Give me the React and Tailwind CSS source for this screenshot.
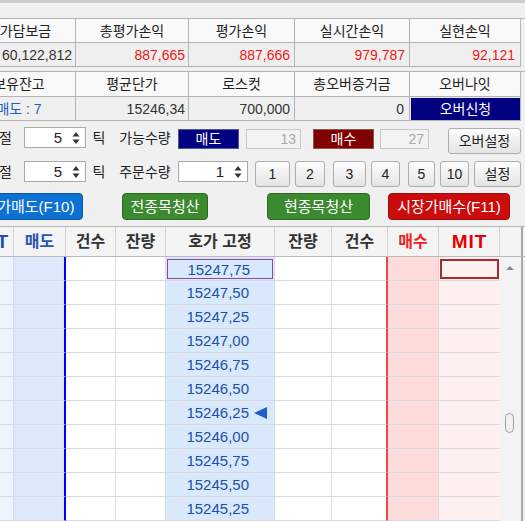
import React from 'react';

const NUM = "font-['Liberation_Sans',sans-serif]";

const summaryTop = [
  { w: 'w-[113px]', label: '추가담보금', value: '60,122,812', cls: 'justify-end pr-[3px] bg-[#efefef] text-[#333]' },
  { w: 'w-[113px]', label: '총평가손익', value: '887,665', cls: 'justify-end pr-[3px] bg-[#efefef] text-[#f01818]' },
  { w: 'w-[106px]', label: '평가손익', value: '887,666', cls: 'justify-end pr-[4px] bg-[#efefef] text-[#f01818]' },
  { w: 'w-[115px]', label: '실시간손익', value: '979,787', cls: 'justify-end pr-[4px] bg-[#efefef] text-[#f01818]' },
  { w: 'w-[111px]', label: '실현손익', value: '92,121', cls: 'justify-end pr-[5px] bg-[#efefef] text-[#f01818]' },
];

const summaryBottom = [
  { w: 'w-[113px]', label: '보유잔고', value: '매도 : 7', cls: 'justify-center bg-[#efefef] text-[#1c5cc4]' },
  { w: 'w-[113px]', label: '평균단가', value: '15246,34', cls: 'justify-end pr-[3px] bg-[#efefef] text-[#333]' },
  { w: 'w-[106px]', label: '로스컷', value: '700,000', cls: 'justify-end pr-[4px] bg-[#efefef] text-[#333]' },
  { w: 'w-[115px]', label: '총오버증거금', value: '0', cls: 'justify-end pr-[5px] bg-[#efefef] text-[#333]' },
  { w: 'w-[111px]', label: '오버나잇', value: '오버신청', cls: 'justify-center bg-[#000080] text-white border-l border-t border-[#e8e8e8]' },
];

const gridCols = [
  { w: 'w-[51px]', head: 'MIT', hc: 'justify-end pr-[4px] text-[#1f4fb8] text-[19px] tracking-[1px]', bg: 'bg-[#eef4fc]', br: 'border-r border-r-[#d8dce4]' },
  { w: 'w-[52px]', head: '매도', hc: 'justify-center text-[#2456b4]', bg: 'bg-[#dce9fb]', br: 'border-r-2 border-r-[#0000ff]' },
  { w: 'w-[50px]', head: '건수', hc: 'justify-center text-[#333]', bg: 'bg-white', br: 'border-r border-r-[#dcdce2]' },
  { w: 'w-[50px]', head: '잔량', hc: 'justify-center text-[#333]', bg: 'bg-white', br: 'border-r border-r-[#dcdce2]' },
  { w: 'w-[109px]', head: '호가 고정', hc: 'justify-center text-[#333]', bg: 'bg-[#dae8fb]', br: 'border-r border-r-[#d4dce8]' },
  { w: 'w-[57px]', head: '잔량', hc: 'justify-center text-[#333]', bg: 'bg-white', br: 'border-r border-r-[#dcdce2]' },
  { w: 'w-[56px]', head: '건수', hc: 'justify-center text-[#333]', bg: 'bg-white', br: 'border-r-2 border-r-[#f04646]' },
  { w: 'w-[51px]', head: '매수', hc: 'justify-center text-[#e8281e]', bg: 'bg-[#ffdcdc]', br: 'border-r border-r-[#ecd4d4]' },
  { w: 'w-[61px]', head: 'MIT', hc: 'justify-center pl-[1px] text-[#e60000] text-[19px] tracking-[1px]', bg: 'bg-[#fff0f0]', br: '' },
];

const prices = [
  '15247,75', '15247,50', '15247,25', '15247,00', '15246,75', '15246,50',
  '15246,25', '15246,00', '15245,75', '15245,50', '15245,25',
];

const SummaryTable = ({ cols, headH }) => (
  <div className="flex ml-[-37px] border-t border-[#b4b4b4]">
    {cols.map((c, i) => (
      <div key={i} className={`${c.w} flex flex-col border-r border-[#b4b4b4]`}>
        <div className={`${headH} flex items-center justify-center border-b border-[#b4b4b4] bg-[#f9f9f9] text-[14px] text-[#222]`}>
          {c.label}
        </div>
        <div className={`h-[24px] flex items-center border-b border-b-[#b4b4b4] text-[14px] ${c.cls}`}>
          <span className={/^[0-9,]+$/.test(c.value) ? NUM + ' text-[14px]' : ''}>{c.value}</span>
        </div>
      </div>
    ))}
  </div>
);

const Spin = ({ w, value }) => (
  <div className={`${w} h-[21px] bg-white border border-[#a9a9a9] flex items-center justify-end pr-[5px]`}>
    <span className={`${NUM} text-[15px] mr-[10px] text-[#222]`}>{value}</span>
    <svg width="8" height="14" viewBox="0 0 8 14">
      <path d="M4 1 L7.5 5.5 H0.5Z" fill="#333" />
      <path d="M4 13 L7.5 8.5 H0.5Z" fill="#333" />
    </svg>
  </div>
);

const GrayBtn = ({ cls, children }) => (
  <button
    type="button"
    className={`${cls} flex items-center justify-center rounded-[3px] border border-[#adadad] bg-gradient-to-b from-[#fdfdfd] to-[#e4e4e4] text-[14px] text-[#222]`}
  >
    {children}
  </button>
);

const ColorBtn = ({ cls, children }) => (
  <button
    type="button"
    className={`${cls} h-[27px] flex items-center justify-center rounded-[4px] border text-[15px] text-white whitespace-nowrap`}
  >
    {children}
  </button>
);

export default function App() {
  return (
    <div className="w-[525px] h-[521px] overflow-hidden bg-[#f0f0f0] font-['Liberation_Sans','Noto_Sans_CJK_KR',sans-serif] leading-none">
      <div className="h-[3px] bg-[#cdcdcd]" />

      <div className="mt-[15px]">
        <SummaryTable cols={summaryTop} headH="h-[24px]" />
      </div>
      <div className="mt-[4px]">
        <SummaryTable cols={summaryBottom} headH="h-[25px]" />
      </div>

      {/* 익절 row */}
      <div className="flex items-start mt-[6px] h-[27px] text-[14px] text-[#222]">
        <span className="ml-[-14px] w-[38px] h-[21px] flex items-center">익절</span>
        <Spin w="w-[62px]" value="5" />
        <span className="w-[26px] h-[21px] flex items-center justify-center">틱</span>
        <span className="w-[66px] h-[21px] flex items-center justify-center">가능수량</span>
        <div className="mt-[2px] w-[61px] h-[20px] flex items-center justify-center bg-[#000080] border border-[#55558a] text-white">매도</div>
        <div className={`ml-[7px] mt-[2px] w-[55px] h-[20px] flex items-center justify-end pr-[4px] border border-[#c8c8c8] bg-[#f3f3f3] text-[#a8a8a8] ${NUM} text-[14px]`}>13</div>
        <div className="ml-[12px] mt-[2px] w-[61px] h-[20px] flex items-center justify-center bg-[#800000] border border-[#8a5555] text-white">매수</div>
        <div className={`ml-[6px] mt-[2px] w-[49px] h-[20px] flex items-center justify-end pr-[4px] border border-[#c8c8c8] bg-[#f3f3f3] text-[#a8a8a8] ${NUM} text-[14px]`}>27</div>
        <GrayBtn cls="ml-[19px] mt-[1px] w-[73px] h-[26px]">오버설정</GrayBtn>
      </div>

      {/* 손절 row */}
      <div className="flex items-start mt-[7px] h-[26px] text-[14px] text-[#222]">
        <span className="ml-[-14px] w-[38px] h-[21px] flex items-center">손절</span>
        <Spin w="w-[62px]" value="5" />
        <span className="w-[26px] h-[21px] flex items-center justify-center">틱</span>
        <span className="w-[66px] h-[21px] flex items-center justify-center">주문수량</span>
        <Spin w="w-[70px]" value="1" />
        <GrayBtn cls="ml-[7px] w-[35px] h-[26px]">1</GrayBtn>
        <GrayBtn cls="ml-[5px] w-[30px] h-[26px]">2</GrayBtn>
        <GrayBtn cls="ml-[8px] w-[33px] h-[26px]">3</GrayBtn>
        <GrayBtn cls="ml-[5px] w-[29px] h-[26px]">4</GrayBtn>
        <GrayBtn cls="ml-[8px] w-[27px] h-[26px]">5</GrayBtn>
        <GrayBtn cls="ml-[5px] w-[29px] h-[26px]">10</GrayBtn>
        <GrayBtn cls="ml-[5px] w-[47px] h-[26px]">설정</GrayBtn>
      </div>

      {/* order buttons */}
      <div className="flex mt-[6px]">
        <ColorBtn cls="ml-[-39px] w-[122px] bg-[#0b72d4] border-[#0a56a6]">시장가매도(F10)</ColorBtn>
        <ColorBtn cls="ml-[39px] w-[86px] bg-[#3c8a30] border-[#2c6a22]">전종목청산</ColorBtn>
        <ColorBtn cls="ml-[59px] w-[103px] bg-[#3c8a30] border-[#2c6a22]">현종목청산</ColorBtn>
        <ColorBtn cls="ml-[18px] w-[122px] bg-[#cc0c0c] border-[#941010]">시장가매수(F11)</ColorBtn>
      </div>

      {/* order book grid */}
      <div className="mt-[6px] ml-[-37px]">
        <div className="flex h-[31px] border-t border-b border-[#b8b8b8] bg-[#f4f4f4]">
          {gridCols.map((c, i) => (
            <div
              key={i}
              className={`${c.w} flex items-center border-r border-[#d2d2d2] font-bold text-[16px] ${c.hc}`}
            >
              {c.head}
            </div>
          ))}
          <div className="w-[23px] border-r-2 border-[#a8a8a8]" />
        </div>

        <div className="flex h-[264px] overflow-hidden">
          <div className="flex flex-col">
            {prices.map((p, r) => (
              <div key={p} className="flex">
                {gridCols.map((c, i) => {
                  const base = `${c.w} h-[24px] border-b border-b-[#d8d8e0] ${c.bg} ${c.br}`;
                  if (i === 4) {
                    if (r === 0) {
                      return (
                        <div key={i} className={`${base} flex pt-[2px] pb-[1px] pl-[1px] pr-[1px]`}>
                          <div className={`flex-1 flex items-center justify-end pr-[22px] border border-[#93449f] text-[#1c4fae] ${NUM} text-[15px]`}>
                            {p}
                          </div>
                        </div>
                      );
                    }
                    return (
                      <div key={i} className={`${base} flex items-center justify-end text-[#1c4fae] ${NUM} text-[15px]`}>
                        <span>{p}</span>
                        <span className="w-[25px] flex items-center pl-[5px]">
                          {p === '15246,25' && (
                            <svg width="13" height="12" viewBox="0 0 13 12">
                              <path d="M0 6 L13 0 V12 Z" fill="#1d5fc9" />
                            </svg>
                          )}
                        </span>
                      </div>
                    );
                  }
                  if (i === 8 && r === 0) {
                    return (
                      <div key={i} className={`${base} flex pt-[2px] pb-[1px] px-[1px]`}>
                        <div className="flex-1 border-2 border-[#a82a2a] bg-[#fff0f0]" />
                      </div>
                    );
                  }
                  return <div key={i} className={base} />;
                })}
              </div>
            ))}
          </div>
          <div className="w-[23px] flex flex-col items-center pr-[2px] bg-[#f3f3f5] border-r-2 border-[#a8a8a8]">
            <svg className="mt-[9px]" width="8" height="4" viewBox="0 0 8 4">
              <path d="M4 0 L8 4 H0 Z" fill="#8a8a8a" />
            </svg>
            <div className="mt-[143px] w-[9px] h-[20px] rounded-full border border-[#a0a0a0] bg-[#f0f0f0]" />
          </div>
        </div>
      </div>
    </div>
  );
}
